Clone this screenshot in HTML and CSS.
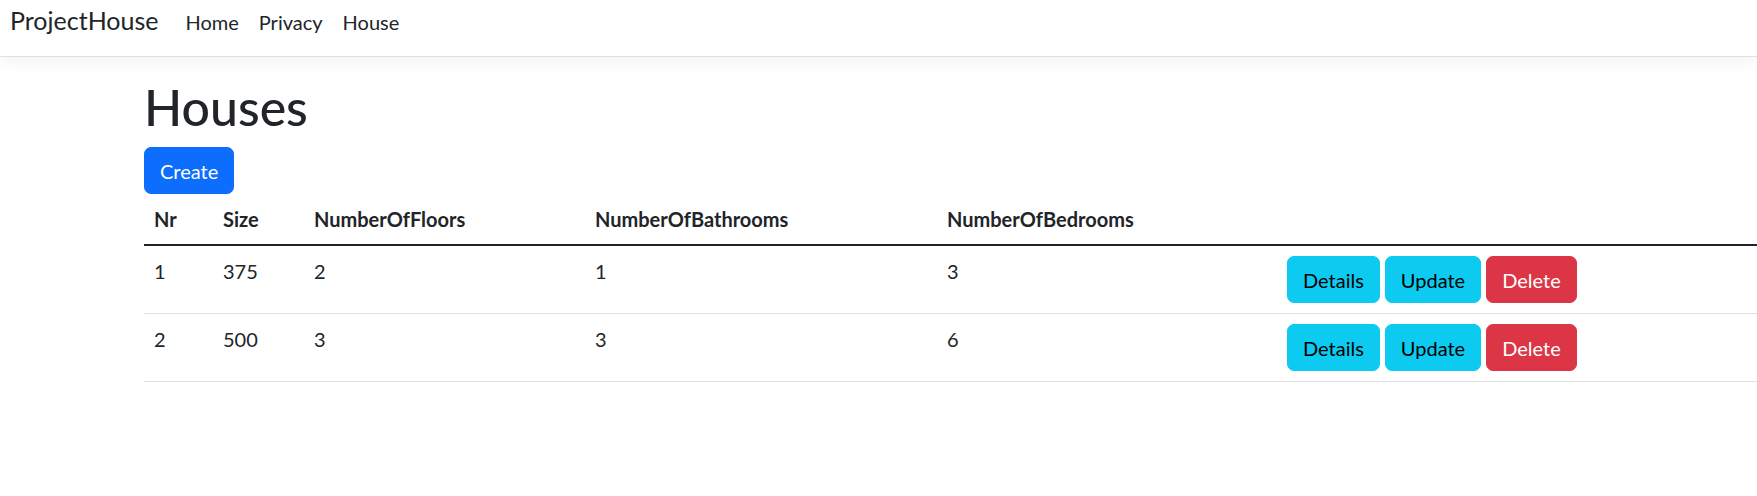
FILE: index.html
```html
<!DOCTYPE html>
<html lang="en">
<head>
<meta charset="utf-8">
<title>Houses - ProjectHouse</title>
<link rel="stylesheet" href="styles.css">
</head>
<body>
<header class="navbar">
  <a class="brand" href="#">ProjectHouse</a>
  <nav class="nav">
    <a class="nav-link" href="#">Home</a>
    <a class="nav-link" href="#">Privacy</a>
    <a class="nav-link" href="#">House</a>
  </nav>
</header>
<main class="container">
  <h1 class="title">Houses</h1>
  <div class="toolbar">
    <a class="btn btn-primary" href="#">Create</a>
  </div>
  <table class="table">
    <colgroup>
      <col class="c-nr">
      <col class="c-size">
      <col class="c-floors">
      <col class="c-bath">
      <col class="c-bed">
      <col class="c-act">
    </colgroup>
    <thead>
      <tr>
        <th>Nr</th>
        <th>Size</th>
        <th>NumberOfFloors</th>
        <th>NumberOfBathrooms</th>
        <th>NumberOfBedrooms</th>
        <th></th>
      </tr>
    </thead>
    <tbody>
      <tr>
        <td>1</td>
        <td>375</td>
        <td>2</td>
        <td>1</td>
        <td>3</td>
        <td><div class="actions"><a class="btn btn-info" href="#">Details</a><a class="btn btn-info" href="#">Update</a><a class="btn btn-danger" href="#">Delete</a></div></td>
      </tr>
      <tr>
        <td>2</td>
        <td>500</td>
        <td>3</td>
        <td>3</td>
        <td>6</td>
        <td><div class="actions"><a class="btn btn-info" href="#">Details</a><a class="btn btn-info" href="#">Update</a><a class="btn btn-danger" href="#">Delete</a></div></td>
      </tr>
    </tbody>
  </table>
</main>
</body>
</html>
```

FILE: styles.css
```css
* { box-sizing: border-box; }

html, body {
  margin: 0;
  padding: 0;
  background: #fff;
  overflow-x: hidden;
}

body {
  font-family: Lato, "Open Sans", sans-serif;
  font-size: 20px;
  line-height: 1.5;
  color: #212529;
}

a { text-decoration: none; }

.navbar {
  display: flex;
  align-items: baseline;
  height: 57px;
  padding: 2px 0 0 10px;
  background: #fff;
  border-bottom: 1px solid #dee2e6;
  box-shadow: 0 5px 15px rgba(0, 0, 0, 0.05);
}

.brand {
  font-size: 25px;
  line-height: 37px;
  color: #212529;
  margin-right: 17px;
}

.nav {
  display: flex;
  align-items: baseline;
}

.nav-link {
  padding: 0 10px;
  font-size: 20px;
  line-height: 30px;
  color: #212529;
}

.container {
  margin-left: 144px;
  padding-top: 20px;
}

.title {
  margin: 0 0 10px;
  font-size: 50px;
  font-weight: 500;
  line-height: 60px;
}

.toolbar {
  display: flex;
}

.btn {
  display: inline-block;
  padding: 7.5px 15px;
  font-size: 20px;
  line-height: 30px;
  border: 1px solid transparent;
  border-radius: 7px;
  text-align: center;
}

.btn-primary {
  background: #0d6efd;
  border-color: #0d6efd;
  color: #fff;
}

.btn-info {
  background: #0dcaf0;
  border-color: #0dcaf0;
  color: #000;
}

.btn-danger {
  background: #dc3545;
  border-color: #dc3545;
  color: #fff;
}

.table {
  width: 100%;
  table-layout: fixed;
  border-collapse: collapse;
  vertical-align: top;
}

.c-nr { width: 69px; }
.c-size { width: 91px; }
.c-floors { width: 281px; }
.c-bath { width: 352px; }
.c-bed { width: 340px; }

.table th,
.table td {
  padding: 10px;
  text-align: left;
  vertical-align: top;
  border-bottom: 1px solid #dee2e6;
}

.table th {
  font-weight: 700;
}

.table thead th {
  border-bottom: 2px solid #212529;
}

.actions {
  display: flex;
  gap: 5px;
}
```
